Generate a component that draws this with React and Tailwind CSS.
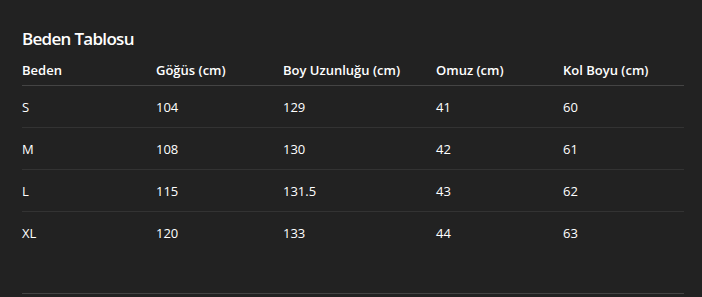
export default function App() {
  const rows = [
    ["S", "104", "129", "41", "60"],
    ["M", "108", "130", "42", "61"],
    ["L", "115", "131.5", "43", "62"],
    ["XL", "120", "133", "44", "63"],
  ];
  const headers = ["Beden", "Göğüs (cm)", "Boy Uzunluğu (cm)", "Omuz (cm)", "Kol Boyu (cm)"];
  const widths = ["w-[134px]", "w-[127px]", "w-[153px]", "w-[127px]", ""];
  return (
    <div
      className="w-[702px] h-[297px] bg-[#222222] text-white pl-[22px] pr-[18px] pt-[27px] overflow-hidden"
      style={{ fontFamily: '"Open Sans", "Noto Sans", sans-serif' }}
    >
      <h2 className="text-[17px] leading-[24px] font-semibold tracking-[-0.7px]">Beden Tablosu</h2>
      <div className="mt-[4px] border-b border-[#444444] pb-[39px]">
        <table className="w-full border-collapse table-fixed">
          <thead>
            <tr className="border-b border-[#444444]">
              {headers.map((h, i) => (
                <th
                  key={h}
                  className={`${widths[i]} text-left text-[13px] leading-[18px] font-semibold p-0 pt-[6px] pb-[6px]`}
                >
                  {h}
                </th>
              ))}
            </tr>
          </thead>
          <tbody>
            {rows.map((r, ri) => (
              <tr
                key={r[0]}
                className={ri < rows.length - 1 ? "border-b border-[#333333]" : ""}
              >
                {r.map((c, ci) => (
                  <td key={ci} className="h-[42px] p-0 text-[13px] leading-[18px] align-middle">
                    {c}
                  </td>
                ))}
              </tr>
            ))}
          </tbody>
        </table>
      </div>
    </div>
  );
}
